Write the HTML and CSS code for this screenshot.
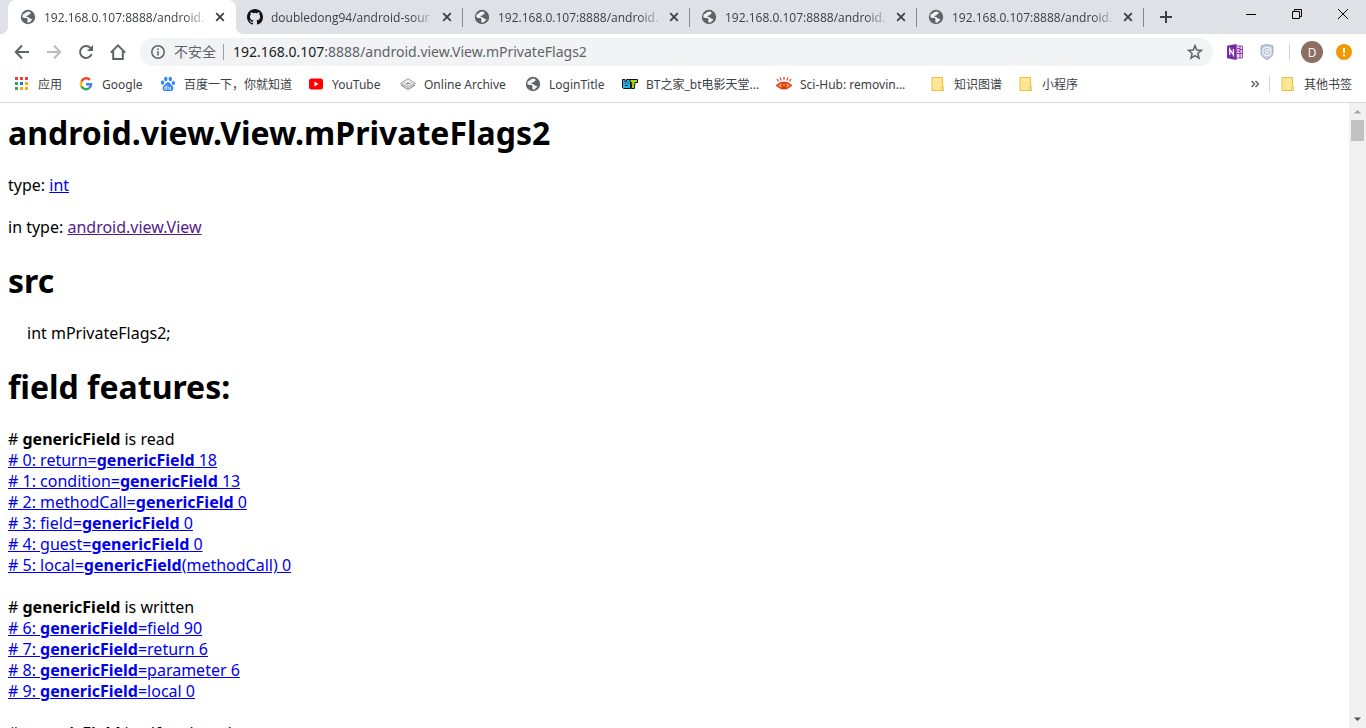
FILE: index.html
```html
<!DOCTYPE html>
<html lang="zh-CN">
<head>
<meta charset="utf-8">
<title>android.view.View.mPrivateFlags2</title>
<link rel="stylesheet" href="styles.css">
</head>
<body>
<svg class="defs" aria-hidden="true">
  <symbol id="globe" viewBox="0 0 16 16">
    <circle cx="8" cy="8" r="7.2" fill="#5f6368"/>
    <path d="M9.2 2.6 6.3 3.1 4.6 4.6 2.6 5.4 2.3 8.3 4.4 8.9 6.7 9 7.6 10.2 7.2 11.8 7.8 13.7 9.4 13.4 11.3 11.8 12.6 10.5 11.3 9.9 9.6 9.3 8 8.1 6.3 7.8 6.6 6.8 8.2 6.5 9 5.4 10.4 5 10.5 3.6Z" fill="#f1f3f4"/>
  </symbol>
  <symbol id="close" viewBox="0 0 10 10"><path d="M1.2 1.2 8.8 8.8M8.8 1.2 1.2 8.8" stroke="#3c4043" stroke-width="1.8"/></symbol>
  <symbol id="folder" viewBox="0 0 16 16">
    <path d="M2 1.5h10.5v9.5l1 .5v3H2z" fill="#ffe694" stroke="#e8c23a"/>
    <path d="M11.5 14V11l2-.2v3.4z" fill="#fff1b8" stroke="#e8c23a" stroke-width=".8"/>
  </symbol>
</svg>
<div class="browser">
  <header class="tabstrip">
    <div class="tab active"><svg class="fav"><use href="#globe"/></svg><span class="tab-title">192.168.0.107:8888/android.</span><button class="tab-close" aria-label="关闭"><svg><use href="#close"/></svg></button></div>
    <div class="tab"><svg class="fav" viewBox="0 0 16 16"><path fill="#111" d="M8 0C3.58 0 0 3.58 0 8c0 3.54 2.29 6.53 5.47 7.59.4.07.55-.17.55-.38v-1.49c-2.23.48-2.7-.94-2.7-.94-.36-.92-.89-1.17-.89-1.17-.73-.5.05-.49.05-.49.81.06 1.23.83 1.23.83.72 1.23 1.88.87 2.34.67.07-.52.28-.88.51-1.08-1.78-.2-3.64-.89-3.64-3.95 0-.87.31-1.59.82-2.15-.08-.2-.36-1.02.08-2.12 0 0 .67-.21 2.2.82a7.6 7.6 0 0 1 4 0c1.53-1.04 2.2-.82 2.2-.82.44 1.1.16 1.92.08 2.12.51.56.82 1.27.82 2.15 0 3.07-1.87 3.75-3.65 3.95.29.25.54.73.54 1.48v2.2c0 .21.15.46.55.38A8 8 0 0 0 16 8c0-4.42-3.58-8-8-8Z"/></svg><span class="tab-title">doubledong94/android-sour</span><button class="tab-close" aria-label="关闭"><svg><use href="#close"/></svg></button></div>
    <div class="tab divided"><svg class="fav"><use href="#globe"/></svg><span class="tab-title">192.168.0.107:8888/android.</span><button class="tab-close" aria-label="关闭"><svg><use href="#close"/></svg></button></div>
    <div class="tab divided"><svg class="fav"><use href="#globe"/></svg><span class="tab-title">192.168.0.107:8888/android.</span><button class="tab-close" aria-label="关闭"><svg><use href="#close"/></svg></button></div>
    <div class="tab divided last"><svg class="fav"><use href="#globe"/></svg><span class="tab-title">192.168.0.107:8888/android.</span><button class="tab-close" aria-label="关闭"><svg><use href="#close"/></svg></button></div>
    <button class="new-tab" aria-label="新标签页"><svg viewBox="0 0 12 12"><path d="M6 0v12M0 6h12" stroke="#3c4043" stroke-width="2"/></svg></button>
    <div class="window-controls">
      <button aria-label="最小化"><svg viewBox="0 0 10 10"><path d="M0 5.5h10" stroke="#000"/></svg></button>
      <button aria-label="还原"><svg viewBox="0 0 10 10"><path d="M.5 2.5h7v7h-7zM2.5 2.5v-2h7v7h-2" fill="none" stroke="#000"/></svg></button>
      <button aria-label="关闭窗口"><svg viewBox="0 0 10 10"><path d="M0 0 10 10M10 0 0 10" stroke="#000"/></svg></button>
    </div>
  </header>

  <nav class="toolbar">
    <button class="nav-btn" aria-label="后退"><svg viewBox="0 0 16 16"><path d="M15 8H2M8 1.5 1.8 8 8 14.5" fill="none" stroke="#5f6368" stroke-width="2"/></svg></button>
    <button class="nav-btn" aria-label="前进"><svg viewBox="0 0 16 16"><path d="M1 8h13M8 1.5 14.2 8 8 14.5" fill="none" stroke="#babcbe" stroke-width="2"/></svg></button>
    <button class="nav-btn" aria-label="重新加载"><svg viewBox="0 0 16 16"><path d="M13.6 10.2A6 6 0 1 1 12.4 3.9L14 5.5" fill="none" stroke="#5f6368" stroke-width="2"/><path d="M15 1v6H9z" fill="#5f6368"/></svg></button>
    <button class="nav-btn" aria-label="主页"><svg viewBox="0 0 16 16"><path d="M.8 8.6 8 1.4l7.2 7.2M3.2 7v8h9.6V7" fill="none" stroke="#5f6368" stroke-width="2"/></svg></button>
    <div class="omnibox">
      <svg class="info" viewBox="0 0 14 14"><circle cx="7" cy="7" r="6.2" fill="none" stroke="#5f6368" stroke-width="1.5"/><path d="M7 6.2v4.3M7 3.4v1.6" stroke="#5f6368" stroke-width="1.6"/></svg>
      <span class="insecure">不安全</span>
      <span class="url"><span class="host">192.168.0.107</span>:8888/android.view.View.mPrivateFlags2</span>
      <button class="star" aria-label="为此网页添加书签"><svg viewBox="0 0 16 16"><path d="m8 1.6 1.8 4.4 4.7.4-3.6 3.1 1.1 4.6L8 11.6l-4 2.5 1.1-4.6L1.5 6.4l4.7-.4z" fill="none" stroke="#5f6368" stroke-width="1.5"/></svg></button>
    </div>
    <div class="extensions">
      <svg class="ext" viewBox="0 0 16 16"><path d="M9 2h6.5v12H9z" fill="#f0dcf5" stroke="#a04bb5"/><path d="M10 4.5h3M10 7h3M10 9.5h3M13 2v12M13 5.5h2.5M13 9.5h2.5" stroke="#8a35a3"/><path d="M0 1.8 9.5 0v16L0 14.2z" fill="#7a2ba0"/><path d="M2.8 11V5l3.6 6V5" fill="none" stroke="#fff" stroke-width="1.3"/></svg>
      <svg class="ext" viewBox="0 0 16 16"><path d="M8 .5 14 2v6c0 4-2.5 6-6 7.5C4.5 14 2 12 2 8V2z" fill="#c3cbda" stroke="#a3adc0"/><circle cx="8" cy="7.5" r="4.2" fill="#b3bdcf" stroke="#f4f6fa" stroke-width="1.2"/><circle cx="8" cy="7.5" r="2" fill="#cdd4e0" stroke="#f4f6fa"/><path d="m9 6.5 3-3" stroke="#f4f6fa"/></svg>
    </div>
    <button class="avatar">D</button>
    <button class="warning" aria-label="更新"><svg viewBox="0 0 16 16"><circle cx="8" cy="8" r="8" fill="#f29900"/><path d="M8 4v5M8 10.5v2" stroke="#fff" stroke-width="2"/></svg></button>
  </nav>

  <nav class="bookmarks">
    <a class="bm bm-apps" href="#"><svg viewBox="0 0 16 16"><path fill="#ea4335" d="M1 1h3v3H1zM6 1h3v3H6zM11 1h3v3h-3z"/><path fill="#34a853" d="M1 6h3v3H1zM1 11h3v3H1z"/><path fill="#1a73e8" d="M6 6h3v3H6z"/><path fill="#fbab05" d="M11 6h3v3h-3zM6 11h3v3H6zM11 11h3v3h-3z"/></svg>应用</a>
    <a class="bm bm-google" href="#"><svg viewBox="0 0 16 16" fill="none" stroke-width="2.5"><path d="M11.8 3.8A5 5 0 0 0 3.5 5.5" stroke="#ea4335"/><path d="M3.5 5.5a5 5 0 0 0 0 5" stroke="#fbbc05"/><path d="M3.5 10.5a5 5 0 0 0 7.8 1.4" stroke="#34a853"/><path d="M11.3 11.9A5 5 0 0 0 13 8.2H8" stroke="#4285f4"/></svg>Google</a>
    <a class="bm bm-baidu" href="#"><svg viewBox="0 0 16 16" fill="#3385ff"><ellipse cx="5.8" cy="3" rx="1.7" ry="2.3"/><ellipse cx="10.3" cy="3" rx="1.7" ry="2.3"/><ellipse cx="2.6" cy="6.7" rx="1.7" ry="2.1"/><ellipse cx="13.4" cy="7" rx="1.7" ry="2.1"/><path d="M8 6.2c2 0 2.6 2 4 3.2 2.6 2.2 1.2 5.6-1.2 5.6H5.2c-2.6 0-3.7-3.4-1.2-5.6 1.4-1.2 2-3.2 4-3.2z"/><path d="M6.8 9.3v4H5.5a1 1 0 0 1 0-2.3h1.3M8.7 10.8v1.8q0 .8.8.8h1v-2.6" fill="none" stroke="#fff" stroke-width=".9"/></svg>百度一下，你就知道</a>
    <a class="bm bm-youtube" href="#"><svg viewBox="0 0 16 16"><rect x="1" y="2.5" width="14" height="11" rx="2.5" fill="#f00"/><path d="m6.5 5.5 4 2.5-4 2.5z" fill="#fff"/></svg>YouTube</a>
    <a class="bm bm-archive" href="#"><svg viewBox="0 0 16 16"><path d="m1 9 7 4.5L15 9" fill="none" stroke="#777"/><path d="M8 2.5 15.5 7.5 8 11.5.5 7.5z" fill="#d6d6d6" stroke="#999" stroke-width=".8"/><path d="m5 5.5 5 4M7 4l5 4M4 8l5-4" stroke="#fff"/><path d="M6 7.5h4" stroke="#888"/></svg>Online Archive</a>
    <a class="bm bm-login" href="#"><svg><use href="#globe"/></svg>LoginTitle</a>
    <a class="bm bm-bt" href="#"><svg viewBox="0 0 16 16"><path d="M.5 3.500h2.500v2h1.500v-2h4V12.500h-7l-1-1z" fill="#1eb4eb" stroke="#111"/><path d="M8 3.500h7.500V6.500h-2.500l-.7 6H9.300L9.800 6.500H8z" fill="#b2d818" stroke="#111"/><path d="M3 9.500h3M6 6.500v1M3.500 7v1" stroke="#111"/></svg>BT之家_bt电影天堂...</a>
    <a class="bm bm-scihub" href="#"><svg viewBox="0 0 16 16"><path d="M.5 9.500Q8 3 15.500 9.500 8 16 .5 9.500z" fill="#f5a11c" stroke="#d8392b" stroke-width="1.3"/><circle cx="8" cy="9.500" r="2.600" fill="#d8392b"/><circle cx="8" cy="9" r="1" fill="#f5a11c"/><path d="M2.500 5.500 1 3M5 4.500 4 1.500M8 4V1M11 4.500l1-3M13.500 5.500 15 3" stroke="#d8392b" stroke-width="1.1"/></svg>Sci-Hub: removin...</a>
    <a class="bm bm-know" href="#"><svg><use href="#folder"/></svg>知识图谱</a>
    <a class="bm bm-mini" href="#"><svg><use href="#folder"/></svg>小程序</a>
    <button class="more" aria-label="更多书签"><svg viewBox="0 0 8 8"><path d="m.5 1 3 3-3 3M4.500 1l3 3-3 3" fill="none" stroke="#5f6368" stroke-width="1.5"/></svg></button>
    <a class="bm bm-other" href="#"><svg><use href="#folder"/></svg>其他书签</a>
  </nav>

  <div class="viewport">
    <main class="page">
      <h1>android.view.View.mPrivateFlags2</h1>
      <p>type: <a href="#">int</a></p>
      <p>in type: <a class="visited" href="#">android.view.View</a></p>
      <h1>src</h1>
      <p class="code">int mPrivateFlags2;</p>
      <h1>field features:</h1>
      <section class="group">
        <div># <b>genericField</b> is read</div>
        <div><a href="#"># 0: return=<b>genericField</b> 18</a></div>
        <div><a href="#"># 1: condition=<b>genericField</b> 13</a></div>
        <div><a href="#"># 2: methodCall=<b>genericField</b> 0</a></div>
        <div><a href="#"># 3: field=<b>genericField</b> 0</a></div>
        <div><a href="#"># 4: guest=<b>genericField</b> 0</a></div>
        <div><a href="#"># 5: local=<b>genericField</b>(methodCall) 0</a></div>
      </section>
      <section class="group">
        <div># <b>genericField</b> is written</div>
        <div><a href="#"># 6: <b>genericField</b>=field 90</a></div>
        <div><a href="#"># 7: <b>genericField</b>=return 6</a></div>
        <div><a href="#"># 8: <b>genericField</b>=parameter 6</a></div>
        <div><a href="#"># 9: <b>genericField</b>=local 0</a></div>
      </section>
      <section class="group">
        <div># <b>genericField</b> itself and read</div>
      </section>
    </main>
    <div class="scrollbar" aria-hidden="true">
      <svg viewBox="0 0 17 17"><path d="M5 10.5h7L8.500 7z" fill="#a3a3a3"/></svg>
      <div class="thumb"></div>
      <svg class="down" viewBox="0 0 17 17"><path d="M5 6.500h7L8.500 10z" fill="#505050"/></svg>
    </div>
  </div>
</div>
</body>
</html>
```
FILE: styles.css
```css
* { box-sizing: border-box; }
body {
  margin: 0;
  font-family: "Open Sans", "Noto Sans CJK SC", sans-serif;
  color: #000;
  background: #fff;
}
button { border: 0; padding: 0; margin: 0; background: none; font: inherit; display: flex; align-items: center; justify-content: center; flex: none; }
svg { display: block; flex: none; }
.defs { position: absolute; width: 0; height: 0; }
.browser { height: 100vh; display: flex; flex-direction: column; overflow: hidden; }

.tabstrip { display: flex; height: 34px; flex: none; background: #dee1e6; padding-left: 8px; }
.tab { display: flex; align-items: center; width: 227px; flex: none; padding: 0 11px; font-size: 12px; color: #3c4043; position: relative; }
.tab.active { width: 228px; padding: 0 11px 0 12px; background: #fff; border-radius: 8px 8px 0 0; }
.tab.active::before, .tab.active::after { content: ""; position: absolute; bottom: 0; width: 8px; height: 8px; }
.tab.active::before { left: -8px; background: radial-gradient(circle at 0 0, #dee1e6 8px, #fff 8px); }
.tab.active::after { right: -8px; background: radial-gradient(circle at 100% 0, #dee1e6 8px, #fff 8px); }
.tab.divided::before, .tab.last::after { content: ""; position: absolute; left: -1px; top: 8px; width: 1px; height: 19px; background: #85888c; }
.tab.last::after { left: auto; right: 0; }
.fav { width: 16px; height: 16px; margin-right: 8px; }
.tab-title { flex: 1; min-width: 0; white-space: nowrap; -webkit-mask-image: linear-gradient(to right, #000 85%, transparent); mask-image: linear-gradient(to right, #000 85%, transparent); }
.tab-close { width: 10px; height: 10px; margin-left: 6px; }
.tab-close svg { width: 10px; height: 10px; }
.new-tab { width: 44px; }
.new-tab svg { width: 12px; height: 12px; }
.window-controls { display: flex; margin-left: auto; height: 28px; }
.window-controls button { width: 46px; }
.window-controls svg { width: 10px; height: 10px; }

.toolbar { display: flex; align-items: center; height: 36px; flex: none; padding: 0 14px 0 6px; }
.nav-btn { width: 32px; height: 32px; }
.nav-btn svg { width: 16px; height: 16px; }
.omnibox { flex: 1; display: flex; align-items: center; height: 28px; margin-left: 6px; padding: 0 10px 0 11px; border-radius: 14px; background: #f1f3f4; font-size: 14px; color: #5f6368; white-space: nowrap; }
.info { width: 14px; height: 14px; margin-right: 9px; }
.insecure { padding-right: 7px; border-right: 1px solid #9aa0a6; line-height: 16px; margin-right: 9px; }
.url { flex: 1; font-family: "Noto Sans", sans-serif; line-height: 18px; }
.host { color: #202124; }
.star svg { width: 16px; height: 16px; }
.extensions { display: flex; gap: 16px; align-items: center; margin-left: 14px; padding-right: 14px; border-right: 1px solid #d0d3d6; }
.ext { width: 16px; height: 16px; }
.avatar { width: 22px; height: 22px; margin-left: 11px; border-radius: 50%; background: #8d6e63; color: #fff; font-size: 12px; }
.warning { margin-left: 13px; }
.warning svg { width: 16px; height: 16px; }

.bookmarks { display: flex; align-items: center; height: 33px; flex: none; padding: 0 14px 4px 14px; border-bottom: 1px solid #d6d8db; font-family: "Noto Sans", "Noto Sans CJK SC", sans-serif; font-size: 12px; }
.bm { display: flex; align-items: center; gap: 8px; color: #3c4043; text-decoration: none; white-space: nowrap; flex: none; height: 20px; }
.bm svg { width: 16px; height: 16px; }
.bm-apps { width: 64px; }
.bm-google { width: 82px; }
.bm-baidu { width: 148px; }
.bm-youtube { width: 92px; }
.bm-archive { width: 125px; }
.bm-login { width: 97px; }
.bm-bt { width: 154px; }
.bm-scihub { width: 154px; }
.bm-know { width: 88px; }
.more { margin-left: auto; padding-right: 10px; height: 16px; border-right: 1px solid #d0d3d6; }
.more svg { width: 8px; height: 8px; }
.bm-other { margin-left: 10px; }

.viewport { flex: 1; min-height: 0; display: flex; }
.page { flex: 1; min-width: 0; overflow: hidden; padding: 8px; font-family: "Noto Sans", sans-serif; font-size: 16px; line-height: 21px; }
.page h1 { margin: 0 0 20px; font-size: 32px; line-height: 44px; font-weight: 700; }
.page p { margin: 0 0 21px; }
.page p + h1 { margin-top: 21px; }
.page p.code { padding-left: 19px; }
.page a { color: #0000ee; text-decoration: underline; }
.page a.visited { color: #551a8b; }
.group { margin-bottom: 21px; }
.page b { font-weight: 700; }
.scrollbar { width: 17px; flex: none; display: flex; flex-direction: column; background: #f1f1f1; }
.scrollbar svg { width: 17px; height: 17px; }
.thumb { height: 21px; margin: 0 2px; background: #c1c1c1; }
.scrollbar .down { margin-top: auto; }
```
